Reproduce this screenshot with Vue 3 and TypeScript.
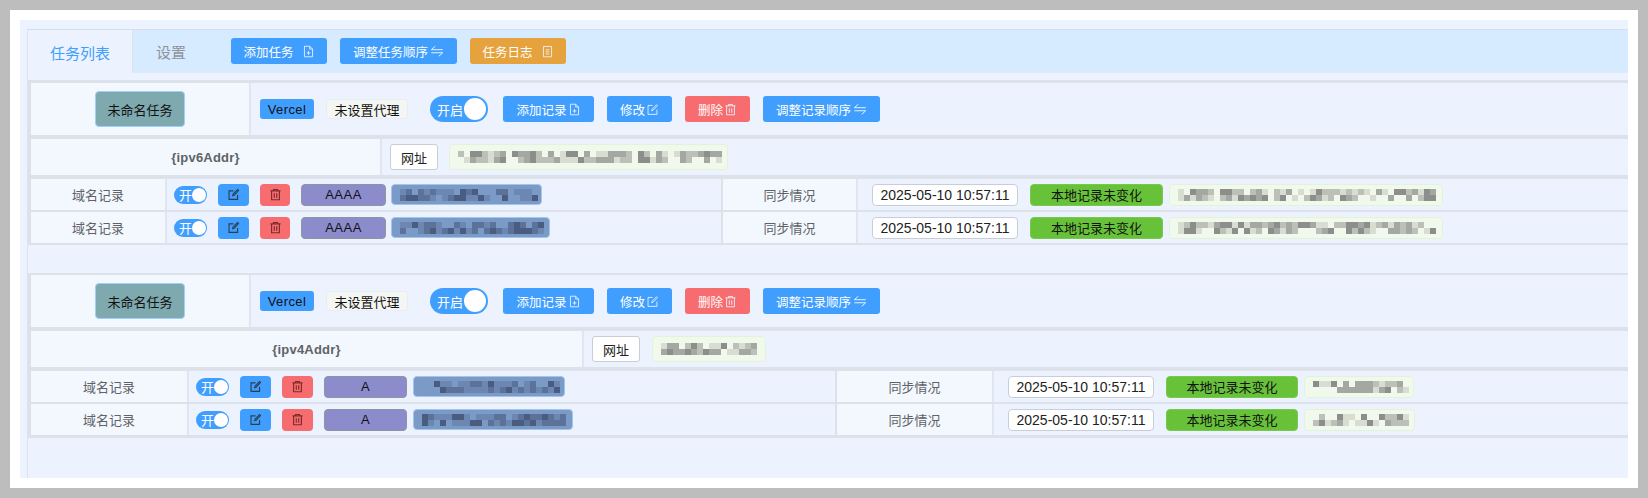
<script setup lang="ts">
type Rec = { type: string; w1: number; w2: number; s1: number; s2: number };
type Task = { key: string; addr: string; urlW: number; s: number; recs: Rec[] };

const tasks: Task[] = [
  { key: 'a', addr: '{ipv6Addr}', urlW: 279, s: 11, recs: [
    { type: 'AAAA', w1: 151, w2: 274, s1: 21, s2: 31 },
    { type: 'AAAA', w1: 159, w2: 274, s1: 41, s2: 51 },
  ] },
  { key: 'b', addr: '{ipv4Addr}', urlW: 114, s: 61, recs: [
    { type: 'A', w1: 152, w2: 110, s1: 71, s2: 81 },
    { type: 'A', w1: 160, w2: 111, s1: 91, s2: 101 },
  ] },
];

function cells(width: number, height: number, seed: number, dark: boolean) {
  let v = seed * 9301 + 49297;
  const next = () => {
    v = (v * 9301 + 49297) % 233280;
    return v / 233280;
  };
  const out: { x: number; y: number; w: number; h: number; fill: string }[] = [];
  const size = 6;
  const top = Math.round(height / 2 - size);
  for (let x = 9; x < width - 9; x += size) {
    for (let r = 0; r < 2; r++) {
      const n = next();
      if (n < (dark ? 0.22 : 0.28)) continue;
      const s = next();
      const fill = dark
        ? s > 0.75 ? '#4a5d80' : s > 0.4 ? '#5c7298' : '#6c87b2'
        : s > 0.8 ? '#8b8e8a' : s > 0.5 ? '#a4a8a2' : s > 0.22 ? '#bcc1b8' : '#d8ddd2';
      out.push({ x, y: top + r * size, w: size, h: size, fill });
    }
  }
  return out;
}
</script>

<template>
  <div class="page">
    <div class="card">
      <div class="panel">
        <div class="tabs">
          <div class="tabbar">
            <div class="tab active">任务列表</div>
            <div class="tab">设置</div>
            <div class="tabtools">
              <button class="btn blue w96">添加任务
                <svg class="ic gapl" viewBox="0 0 16 16"><path d="M3 1.5h6.5l3.5 3.5v9.5H3zM9.5 1.5V5H13M8 7.5v4.5M5.8 9.8h4.4" /></svg>
              </button>
              <button class="btn blue w117">调整任务顺序
                <svg class="ic sort" viewBox="0 0 16 16"><path d="M6 2.5L1.5 6.5h13M1.5 10h13L10 14" /></svg>
              </button>
              <button class="btn orange w96">任务日志
                <svg class="ic gapl" viewBox="0 0 16 16"><path d="M3 1.8h10v12.7H3zM5.8 6h4.4M5.8 8.5h4.4M5.8 11h4.4" /></svg>
              </button>
            </div>
          </div>

          <section v-for="t in tasks" :key="t.key" class="task" :class="'task-' + t.key">
            <div class="row row-head">
              <div class="cell name-cell"><div class="name-btn">未命名任务</div></div>
              <div class="cell-main head-main">
                <span class="tag tag-blue">Vercel</span>
                <span class="tag tag-plain">未设置代理</span>
                <div class="switch big"><span>开启</span><i></i></div>
                <button class="btn blue w91">添加记录
                  <svg class="ic" viewBox="0 0 16 16"><path d="M3 1.5h6.5l3.5 3.5v9.5H3zM9.5 1.5V5H13M8 7.5v4.5M5.8 9.8h4.4" /></svg>
                </button>
                <button class="btn blue w65">修改
                  <svg class="ic" viewBox="0 0 16 16"><path d="M13.5 8v6h-11V3H8M7 9.5l.5-2L13 2l1.2 1.2L8.8 8.9z" /></svg>
                </button>
                <button class="btn red w65">删除
                  <svg class="ic" viewBox="0 0 16 16"><path d="M1.8 3.5h12.4M5.5 3.5V1.8h5v1.7M3.2 3.5v11h9.6v-11M6.5 6.5v5.5M9.5 6.5v5.5" /></svg>
                </button>
                <button class="btn blue w117">调整记录顺序
                  <svg class="ic sort" viewBox="0 0 16 16"><path d="M6 2.5L1.5 6.5h13M1.5 10h13L10 14" /></svg>
                </button>
              </div>
            </div>

            <div class="row row-addr">
              <div class="cell addr-cell">{{ t.addr }}</div>
              <div class="cell-main addr-main">
                <div class="url-btn">网址</div>
                <svg class="mosaic m-green m-tall" :width="t.urlW" height="26">
                  <rect x="0.5" y="0.5" :width="t.urlW - 1" height="25" rx="3.5" class="m-box" />
                  <rect v-for="(c, i) in cells(t.urlW, 26, t.s, false)" :key="i" :x="c.x" :y="c.y" :width="c.w" :height="c.h" :fill="c.fill" />
                </svg>
              </div>
            </div>

            <div v-for="r in t.recs" :key="r.s1" class="row row-rec">
              <div class="cell label-cell">域名记录</div>
              <div class="cell-main rec-main">
                <div class="switch small"><span>开</span><i></i></div>
                <div class="sq-btn sq-edit">
                  <svg class="ic dark" viewBox="0 0 16 16"><path d="M13 8.5V14H2.5V3.5H8M7 9.5l.5-2L13 2l1.2 1.2L8.8 8.9z" /></svg>
                </div>
                <div class="sq-btn sq-del">
                  <svg class="ic dark" viewBox="0 0 16 16"><path d="M1.8 3.5h12.4M5.5 3.5V1.8h5v1.7M3.2 3.5v11h9.6v-11M6.5 6.5v5.5M9.5 6.5v5.5" /></svg>
                </div>
                <div class="type-box">{{ r.type }}</div>
                <svg class="mosaic m-blue" :width="r.w1" height="21">
                  <rect x="0.5" y="0.5" :width="r.w1 - 1" height="20" rx="3.5" class="m-box" />
                  <rect v-for="(c, i) in cells(r.w1, 21, r.s1, true)" :key="i" :x="c.x" :y="c.y" :width="c.w" :height="c.h" :fill="c.fill" />
                </svg>
              </div>
              <div class="cell sync-cell">同步情况</div>
              <div class="cell-main sync-main">
                <div class="time-box">2025-05-10 10:57:11</div>
                <div class="ok-box">本地记录未变化</div>
                <svg class="mosaic m-green" :width="r.w2" height="22">
                  <rect x="0.5" y="0.5" :width="r.w2 - 1" height="21" rx="3.5" class="m-box" />
                  <rect v-for="(c, i) in cells(r.w2, 22, r.s2, false)" :key="i" :x="c.x" :y="c.y" :width="c.w" :height="c.h" :fill="c.fill" />
                </svg>
              </div>
            </div>
          </section>
        </div>
      </div>
    </div>
  </div>
</template>

<style>
html, body { margin: 0; background: #bdbdbd; }
</style>

<style scoped>
* { box-sizing: border-box; }
.page {
  width: 1648px; height: 498px; padding: 10px; overflow: hidden;
  background: #bdbdbd;
  font-family: "Liberation Sans", "Noto Sans CJK SC", sans-serif;
  font-size: 13px; color: #111;
}
.card { height: 478px; background: #fff; padding: 10px; }
.panel { height: 458px; background: #ecf3fe; padding: 9px 0 0 7px; overflow: hidden; }
.tabs { height: 449px; border-left: 1px solid #dde3ee; }
.tabbar {
  height: 44px; display: flex; align-items: stretch; background: #d6ebff;
  border-top: 1px solid #d3dfee; border-bottom: 1px solid #e2eaf5; margin-bottom: 7px;
}
.tab {
  width: 76px; display: flex; align-items: center; justify-content: center;
  font-size: 15px; color: #909399; padding-top: 1px;
}
.tab.active {
  width: 105px; background: #ecf3fe; color: #409eff; margin-bottom: -1px;
  border-right: 1px solid #dde3ee;
}
.tabtools { display: flex; gap: 13px; align-items: flex-start; padding: 8px 0 0 22px; }
.btn {
  height: 26px; border: 0; border-radius: 3px; color: #fff; padding: 0;
  font: inherit; font-size: 12.5px; display: flex; align-items: center; justify-content: center;
}
.blue { background: #409eff; }
.orange { background: #e6a23c; }
.red { background: #f76d6f; }
.w96 { width: 96px; }
.w117 { width: 117px; }
.w91 { width: 91px; }
.w65 { width: 65px; }
.ic {
  width: 13px; height: 13px; margin-left: 1px; fill: none; stroke: #eaf4ff; stroke-width: 1.1; flex: none;
}
.ic.gapl { margin-left: 8px; }
.ic.sort { width: 14px; height: 14px; margin-left: 2px; }
.ic.dark { stroke: #2c3e50; width: 13px; height: 13px; stroke-width: 1.4; margin: 0; }
.sq-del .ic.dark { stroke: #7c2b2e; }

.task { background: #dde1ea; padding: 3px 0 2px 3px; display: flex; flex-direction: column; margin-bottom: 28px; }
.task-b { padding: 2px 0 3px 3px; }
.row { display: flex; }
.row-head { height: 52px; margin-bottom: 4px; }
.row-addr { height: 36px; margin-bottom: 4px; }
.row-rec { height: 31px; margin-bottom: 2px; }
.row-rec:last-child { margin-bottom: 0; }
.cell {
  background: #f3f8ff; display: flex; align-items: center; justify-content: center;
  color: #606266; flex: none; border-right: 2px solid #dfe6f0;
}
.cell-main { background: #ecf3fe; display: flex; align-items: center; flex: none; }
.name-cell { width: 220px; }
.name-btn {
  width: 90px; height: 36px; display: flex; align-items: center; justify-content: center;
  background: #7eaaaf; border: 1px solid #a0cfff; border-radius: 4px; color: #111;
}
.head-main { flex: 1; padding-left: 9px; }
.tag { height: 20px; display: flex; align-items: center; justify-content: center; border-radius: 3px; }
.tag-blue { width: 54px; background: #409eff; color: #111; letter-spacing: 0.4px; }
.tag-plain { width: 82px; margin-left: 12px; background: #f4f6f4; border: 1px solid #e9edf0; }
.switch { background: #409eff; color: #fff; display: flex; align-items: center; flex: none; }
.switch i { display: block; background: #fff; border-radius: 50%; flex: none; }
.switch.big { width: 58px; height: 26px; border-radius: 13px; margin: 0 15px 0 22px; padding: 0 2px 0 7px; justify-content: space-between; }
.switch.big i { width: 22px; height: 22px; }
.switch.small { width: 33px; height: 18px; border-radius: 9px; padding: 0 2px 0 5px; justify-content: space-between; font-size: 13px; }
.switch.small i { width: 14px; height: 14px; }
.head-main .btn + .btn { margin-left: 13px; }

.addr-cell { font-weight: 700; color: #606266; letter-spacing: 0.2px; }
.task-a .addr-cell { width: 351px; }
.task-b .addr-cell { width: 553px; }
.addr-main { flex: 1; padding-left: 8px; }
.url-btn {
  width: 48px; height: 26px; background: #fff; border: 1px solid #c9ced6; border-radius: 3px;
  display: flex; align-items: center; justify-content: center; margin-right: 11px; color: #222;
}
.task-b .url-btn { margin-right: 12px; }
.mosaic { display: block; flex: none; }
.m-green .m-box { fill: #f0f9eb; stroke: #e3f3da; }
.m-blue .m-box { fill: #7a9ac8; stroke: #a5c4ea; }
.label-cell { width: 136px; }
.task-b .label-cell { width: 158px; }
.rec-main { width: 554px; padding-left: 7px; }
.task-b .rec-main { width: 646px; }
.sq-btn { width: 31px; height: 22px; border-radius: 4px; display: flex; align-items: center; justify-content: center; margin-left: 11px; }
.sq-edit { background: #409eff; }
.sq-del { background: #f76d6f; width: 30px; }
.task-b .sq-del { width: 31px; }
.type-box {
  width: 85px; height: 22px; margin: 0 5px 0 11px; background: #8c8ccc; border: 1px solid #9093a0;
  border-radius: 4px; display: flex; align-items: center; justify-content: center; color: #111; letter-spacing: 0.5px;
}
.task-b .type-box { width: 83px; margin-right: 6px; }
.sync-cell { width: 135px; margin-left: 2px; }
.task-b .sync-cell { width: 157px; }
.sync-main { flex: 1; padding-left: 14px; }
.time-box {
  width: 146px; height: 22px; background: #fff; border: 1px solid #c9ced6; border-radius: 4px;
  display: flex; align-items: center; justify-content: center; font-size: 14px; color: #222;
}
.ok-box {
  width: 133px; height: 22px; margin: 0 6px 0 12px; background: #67c23a; border-radius: 4px;
  border: 1px solid #76c94c; display: flex; align-items: center; justify-content: center; color: #111;
}
.task-b .ok-box { width: 132px; }
</style>
